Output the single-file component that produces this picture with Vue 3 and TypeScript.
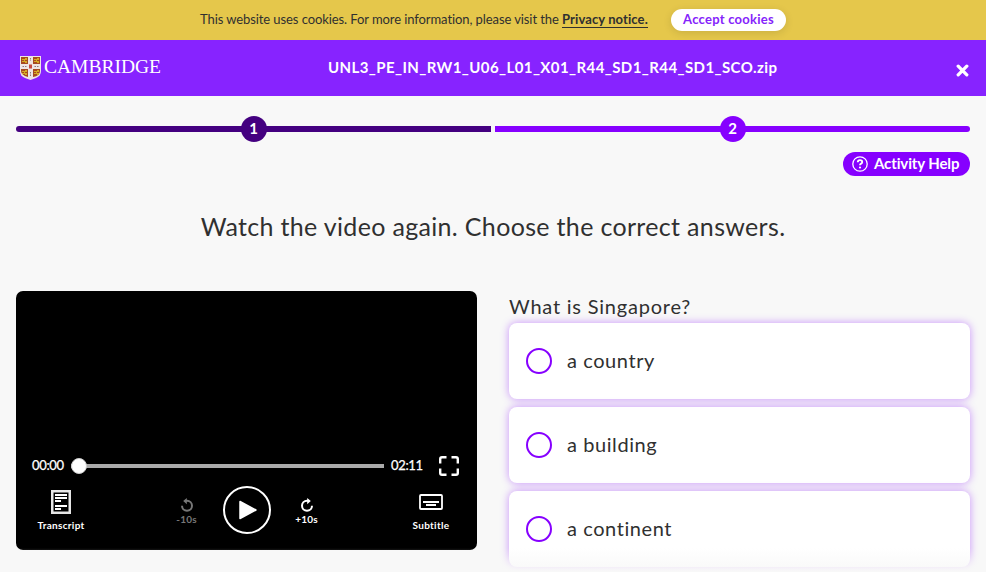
<script setup lang="ts">
import { ref } from 'vue'

interface Answer {
  id: number
  label: string
}

const title = 'UNL3_PE_IN_RW1_U06_L01_X01_R44_SD1_R44_SD1_SCO.zip'
const steps: number[] = [1, 2]
const answers: Answer[] = [
  { id: 1, label: 'a country' },
  { id: 2, label: 'a building' },
  { id: 3, label: 'a continent' },
]
const current = ref(1)
const selected = ref<number | null>(null)
</script>

<template>
  <div class="page">
    <div class="cookies">
      <p class="cookie-text">This website uses cookies. For more information, please visit the <a class="notice">Privacy notice.</a></p>
      <button class="accept"><span>Accept cookies</span></button>
    </div>

    <header class="header">
      <div class="logo">
        <svg class="crest" width="21" height="24" viewBox="0 0 21 24">
          <path d="M0 0h21v15q0 5-5 7l-5.500 2l-5.500-2q-5-2-5-7z" fill="#eee6e4" />
          <path d="M1 1h7v7h-7zM13 1h7v7h-7zM1 13h7v8q-7-2-7-6zM13 13h7v2q0 5-7 6z" fill="#a64a20" />
          <path d="M2 3h3v-1h2v2h-2v1h2v2h-2v-1h-3v-1h2v-1h-2zM14 3h3v-1h2v2h-2v1h2v2h-2v-1h-3v-1h2v-1h-2zM2 15h3v-1h2v2h-2v1h2v2h-2v-1h-3v-1h2v-1h-2zM14 15h3v-1h2v2h-2v1h2v2h-2v-1h-3v-1h2v-1h-2z" fill="#d5ab24" />
          <path d="M9 8.500h3v4h-3z" fill="#c4493e" />
          <path d="M10.500 2v3M10.500 16v4M2.500 10.500h4M14.500 10.500h4" stroke="#8d7d80" stroke-width="1" stroke-dasharray="1.500 1" />
        </svg>
        <span class="brand">CAMBRIDGE</span>
      </div>
      <h1 class="title">{{ title }}</h1>
      <button class="close" aria-label="Close">
        <svg width="13" height="13" viewBox="0 0 13 13"><path d="M2.200 2.200l8.600 8.600M10.800 2.200l-8.600 8.600" stroke="#fff" stroke-width="3.300" stroke-linecap="round" /></svg>
      </button>
    </header>

    <main class="main">
      <nav class="progress">
        <div v-for="n in steps" :key="n" class="step" :class="{ active: n === current }">
          <span class="dot">{{ n }}</span>
        </div>
      </nav>

      <div class="help-row">
        <button class="help">
          <svg width="16" height="16" viewBox="0 0 16 16" fill="none" stroke="#fff">
            <circle cx="8" cy="8" r="7.200" stroke-width="1.300" />
            <path d="M5.800 6.300q0-2.200 2.200-2.200t2.200 1.900q0 1.100-1.100 1.700t-1.100 1.600" stroke-width="1.900" />
            <circle cx="8" cy="11.500" r="1.100" fill="#fff" stroke="none" />
          </svg>
          <span>Activity Help</span>
        </button>
      </div>

      <h2 class="rubric"><span>Watch the video again. Choose the correct answers.</span></h2>

      <div class="columns">
        <section class="video">
          <div class="timeline">
            <span class="time">00:00</span>
            <div class="track"><i class="thumb"></i></div>
            <span class="time">02:11</span>
            <svg class="fullscreen" width="20" height="20" viewBox="0 0 20 20" fill="none" stroke="#fff" stroke-width="2.400">
              <path d="M1.200 7.500V3q0-1.800 1.800-1.800h4.500M12.500 1.200H17q1.800 0 1.800 1.800v4.500M18.800 12.500V17q0 1.800-1.800 1.800h-4.500M7.500 18.800H3q-1.800 0-1.800-1.800v-4.500" />
            </svg>
          </div>
          <div class="controls">
            <button class="tool transcript">
              <svg width="20" height="24" viewBox="0 0 20 24">
                <rect x="1.250" y="1.250" width="17.500" height="21.500" fill="none" stroke="#e6e6e6" stroke-width="2.500" />
                <path d="M4 5h12M4 8h12M4 11h6M4 16h12M4 19h6" stroke="#fff" stroke-width="2" />
              </svg>
              <span>Transcript</span>
            </button>
            <div class="playback">
              <button class="skip back">
                <svg width="12" height="14" viewBox="0 0 12 14" fill="none" stroke="currentColor" stroke-width="2">
                  <path d="M1 7.800a5 5 0 1 0 5-5H4" /><path d="M5.800 0L2.200 2.900l3.600 3.300z" fill="currentColor" stroke="none" />
                </svg>
                <span>-10s</span>
              </button>
              <button class="play" aria-label="Play">
                <svg width="18" height="20" viewBox="0 0 18 20"><path d="M1 1.500v17L17 10z" fill="#fff" stroke="#fff" stroke-width="1.500" stroke-linejoin="round" /></svg>
              </button>
              <button class="skip">
                <svg width="12" height="14" viewBox="0 0 12 14" fill="none" stroke="currentColor" stroke-width="2">
                  <path d="M11 7.800a5 5 0 1 1-5-5h2" /><path d="M6.200 0l3.600 2.900l-3.600 3.300z" fill="currentColor" stroke="none" />
                </svg>
                <span>+10s</span>
              </button>
            </div>
            <button class="tool subtitle">
              <svg width="24" height="16" viewBox="0 0 24 16" fill="none" stroke="#fff">
                <rect x="1" y="1" width="22" height="14" rx="1" stroke-width="1.800" />
                <path d="M4 8h16M7 11h10" stroke-width="2" />
              </svg>
              <span>Subtitle</span>
            </button>
          </div>
        </section>

        <section class="quiz">
          <p class="question">What is Singapore?</p>
          <div class="answers">
            <button v-for="a in answers" :key="a.id" class="answer" @click="selected = a.id">
              <i class="radio" :class="{ checked: selected === a.id }"></i>
              <span class="label">{{ a.label }}</span>
            </button>
          </div>
        </section>
      </div>
    </main>
    <div class="fade"></div>
  </div>
</template>

<style>
body {
  margin: 0;
  overflow: hidden;
}
</style>

<style scoped>
* {
  box-sizing: border-box;
}
.page {
  position: relative;
  width: 100%;
  height: 572px;
  display: flex;
  flex-direction: column;
  overflow: hidden;
  background: #f8f8f8;
  color: #303030;
  font-family: Lato, "Open Sans", sans-serif;
}
button {
  border: 0;
  padding: 0;
  background: none;
  font: inherit;
  color: inherit;
  white-space: nowrap;
}
svg {
  display: block;
  flex: none;
}
.cookies {
  flex: none;
  height: 40px;
  display: flex;
  align-items: center;
  padding-left: 200px;
  gap: 24px;
  background: #e5c74b;
}
.cookie-text {
  margin: 0;
  padding-bottom: 2px;
  width: 447px;
  font-size: 13px;
  line-height: 16px;
  letter-spacing: -0.085px;
  white-space: nowrap;
}
.notice {
  display: inline-block;
  font-weight: 700;
  border-bottom: 1px solid #303030;
  letter-spacing: 0.1px;
}
.accept {
  width: 115px;
  height: 22px;
  border-radius: 11px;
  background: #fff;
  color: #8524fb;
  font-size: 13px;
  font-weight: 700;
  line-height: 20px;
  letter-spacing: 0.25px;
  padding-bottom: 2px;
  box-shadow: 0 2px 8px rgba(0, 0, 0, 0.12);
}
.header {
  flex: none;
  height: 56px;
  display: flex;
  align-items: center;
  padding: 0 17px 0 20px;
  background: #8723ff;
  color: #fff;
}
.logo {
  display: flex;
  align-items: center;
  width: 308px;
  gap: 3px;
}
.brand {
  padding-bottom: 2px;
  font-family: "Liberation Serif", serif;
  font-size: 19.500px;
  line-height: 24px;
}
.title {
  margin: 0;
  padding-bottom: 2px;
  font-size: 15px;
  line-height: 20px;
  font-weight: 700;
  letter-spacing: 0.42px;
  white-space: nowrap;
}
.close {
  margin: 5px 0 0 auto;
}
.main {
  padding: 20px 16px 0;
}
.progress {
  display: flex;
  gap: 4px;
}
.step {
  flex: 1;
  height: 26px;
  display: flex;
  align-items: center;
}
.step::before,
.step::after {
  content: "";
  flex: 1;
  height: 6px;
  background: #8600ff;
}
.step:first-child::before {
  border-radius: 3px 0 0 3px;
}
.step:last-child::after {
  border-radius: 0 3px 3px 0;
}
.dot {
  width: 26px;
  height: 26px;
  margin: 0 -1px;
  border-radius: 50%;
  background: #8600ff;
  color: #fff;
  font-size: 15px;
  font-weight: 700;
  line-height: 25px;
  text-align: center;
}
.active .dot,
.active::before,
.active::after {
  background: #440080;
}
.help-row {
  display: flex;
  justify-content: flex-end;
  padding-top: 10px;
}
.help {
  width: 127px;
  height: 24px;
  display: flex;
  align-items: center;
  gap: 6px;
  padding-left: 9px;
  border-radius: 12px;
  background: #8600ff;
  color: #fff;
  font-size: 15px;
  font-weight: 700;
  letter-spacing: -0.12px;
}
.help span {
  padding-bottom: 2px;
}
.rubric {
  margin: 34px 0 0;
  text-align: center;
  font-size: 25px;
  line-height: 32px;
  font-weight: 400;
  letter-spacing: 0.33px;
}
.columns {
  display: grid;
  grid-template-columns: 1fr 1fr;
  gap: 32px;
  align-items: start;
  margin-top: 49px;
}
.video {
  height: 259px;
  border-radius: 7px;
  background: #000;
  color: #fff;
  padding: 164px 16px 0;
}
.timeline {
  display: flex;
  align-items: center;
  height: 22px;
  padding-right: 2px;
}
.time {
  width: 32px;
  padding-bottom: 2px;
  font-size: 13px;
  line-height: 20px;
  font-weight: 400;
  letter-spacing: -0.35px;
  white-space: nowrap;
  -webkit-text-stroke: 0.250px #fff;
}
.track {
  flex: 1;
  display: flex;
  align-items: center;
  height: 4px;
  margin: 0 7px;
  background: #aaa;
}
.thumb {
  width: 16px;
  height: 16px;
  border: 1px solid #ccc;
  border-radius: 50%;
  background: #fff;
}
.fullscreen {
  margin-left: 16px;
}
.controls {
  display: flex;
  justify-content: space-between;
  padding-top: 9px;
}
.tool {
  display: flex;
  flex-direction: column;
  align-items: center;
  font-size: 10px;
  line-height: 12px;
  font-weight: 700;
  letter-spacing: 0.3px;
  height: 48px;
  padding-top: 4px;
  width: 58px;
}
.tool span {
  margin-top: auto;
  margin-bottom: 3px;
}
.subtitle {
  width: 56px;
  margin-right: 2px;
  padding-top: 8px;
}
.playback {
  display: flex;
  gap: 20px;
}
.skip {
  width: 32px;
  display: flex;
  flex-direction: column;
  align-items: center;
  padding-top: 12px;
  font-size: 10px;
  line-height: 12px;
  font-weight: 700;
  letter-spacing: 0.2px;
}
.skip span {
  margin-top: 1px;
}
.back {
  color: #777;
}
.play {
  width: 48px;
  height: 48px;
  display: flex;
  align-items: center;
  justify-content: center;
  padding-left: 2px;
  border: 2px solid #fff;
  border-radius: 50%;
}
.question {
  margin: 0;
  height: 32px;
  font-size: 20px;
  line-height: 30px;
  letter-spacing: 0.78px;
  white-space: nowrap;
}
.answers {
  display: grid;
  gap: 8px;
}
.answer {
  height: 76px;
  display: flex;
  align-items: center;
  gap: 15px;
  padding-left: 17px;
  border-radius: 8px;
  background: #fff;
  box-shadow: 0 0 8px rgba(134, 0, 255, 0.42);
  font-size: 20px;
  line-height: 26px;
}
.radio {
  width: 26px;
  height: 26px;
  border: 2px solid #8600ff;
  border-radius: 50%;
}
.radio.checked {
  box-shadow: inset 0 0 0 5px #fff, inset 0 0 0 13px #8600ff;
}
.label {
  padding-bottom: 2px;
  letter-spacing: 0.58px;
}
.fade {
  position: absolute;
  inset: auto 0 0;
  height: 24px;
  background: linear-gradient(rgba(248, 248, 248, 0), #f8f8f8);
  pointer-events: none;
}
</style>
